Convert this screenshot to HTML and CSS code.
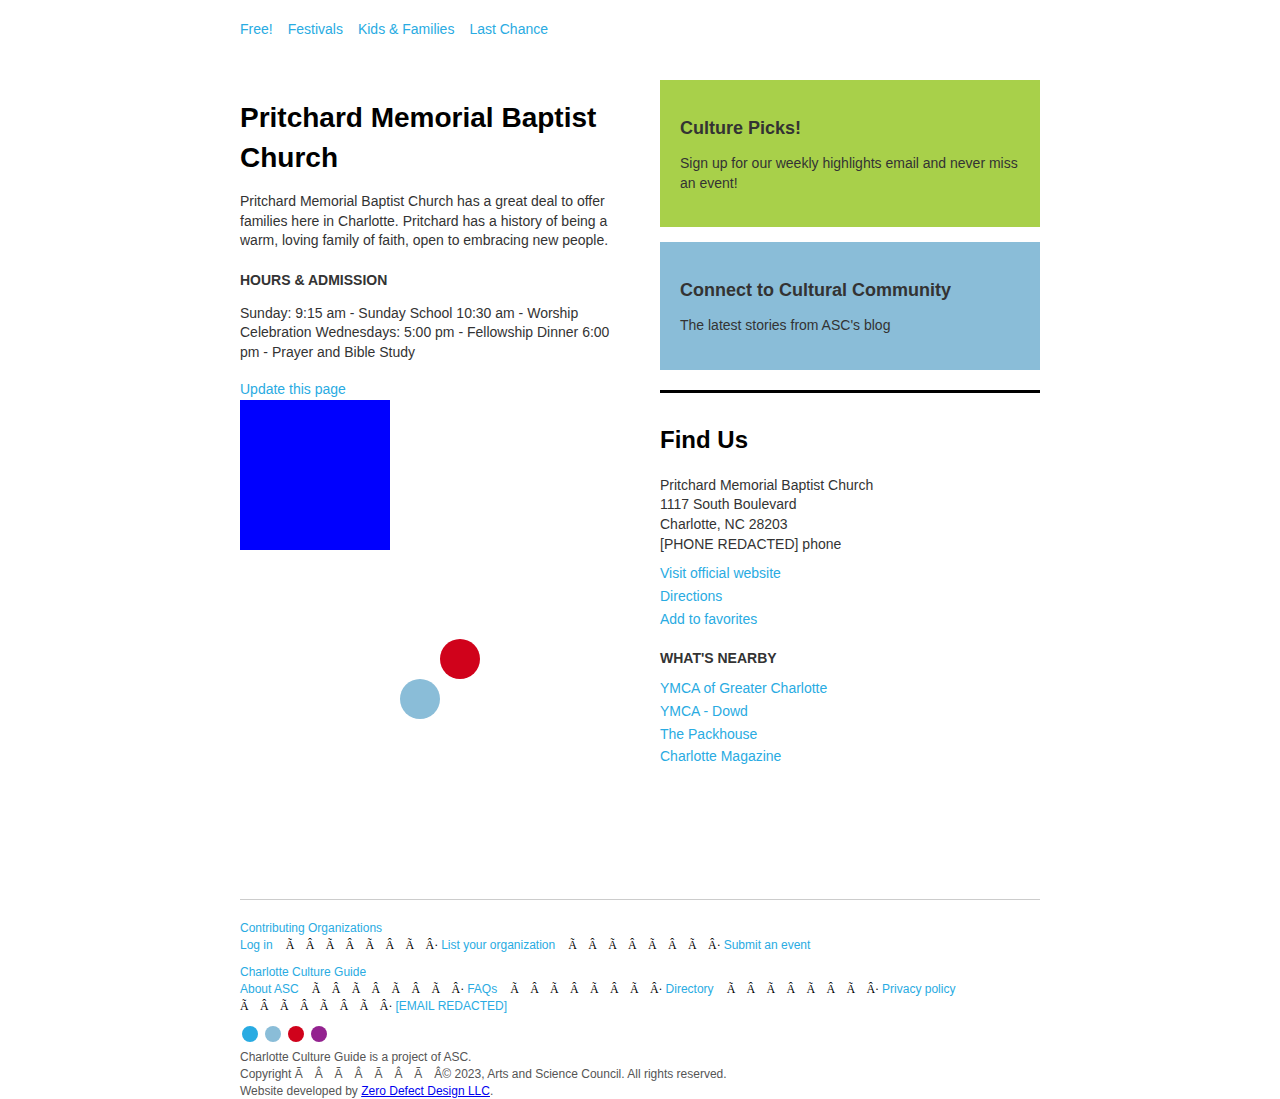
FILE: index.html
```html
<!DOCTYPE html>
<html lang="en">
<head>
<meta charset="utf-8">
<title>Pritchard Memorial Baptist Church</title>
<link rel="stylesheet" href="styles.css">
</head>
<body>
<div class="page">
  <nav class="topnav">
    <a href="#">Free!</a>
    <a href="#">Festivals</a>
    <a href="#">Kids &amp; Families</a>
    <a href="#">Last Chance</a>
  </nav>

  <main class="main">
    <section class="left">
      <h1 class="title">Pritchard Memorial Baptist Church</h1>
      <p class="text">Pritchard Memorial Baptist Church has a great deal to offer families here in Charlotte. Pritchard has a history of being a warm, loving family of faith, open to embracing new people.</p>
      <h4 class="label">HOURS &amp; ADMISSION</h4>
      <p class="text">Sunday: 9:15 am - Sunday School 10:30 am - Worship Celebration Wednesdays: 5:00 pm - Fellowship Dinner 6:00 pm - Prayer and Bible Study</p>
      <a class="update" href="#">Update this page</a>
      <div class="photo"></div>
      <div class="loader">
        <span class="dot"></span>
        <span class="dot red"></span>
        <span class="dot sky"></span>
        <span class="dot"></span>
      </div>
    </section>

    <aside class="right">
      <div class="promo green">
        <h3 class="promo-title">Culture Picks!</h3>
        <p class="promo-text">Sign up for our weekly highlights email and never miss an event!</p>
      </div>
      <div class="promo blue">
        <h3 class="promo-title">Connect to Cultural Community</h3>
        <p class="promo-text">The latest stories from ASC's blog</p>
      </div>
      <div class="findus">
        <h2 class="find-title">Find Us</h2>
        <p class="address">Pritchard Memorial Baptist Church<br>1117 South Boulevard<br>Charlotte, NC 28203<br>[PHONE REDACTED] phone</p>
        <ul class="links">
          <li><a href="#">Visit official website</a></li>
          <li><a href="#">Directions</a></li>
          <li><a href="#">Add to favorites</a></li>
        </ul>
        <h4 class="label nearby">WHAT'S NEARBY</h4>
        <ul class="links nearby-links">
          <li><a href="#">YMCA of Greater Charlotte</a></li>
          <li><a href="#">YMCA - Dowd</a></li>
          <li><a href="#">The Packhouse</a></li>
          <li><a href="#">Charlotte Magazine</a></li>
        </ul>
      </div>
    </aside>
  </main>

  <footer class="footer">
    <div class="fgroup">
      <div class="fline"><a href="#">Contributing Organizations</a></div>
      <div class="fline"><a href="#">Log in</a> <span class="mj">Ã&nbsp;Â&nbsp;Ã&nbsp;Â&nbsp;Ã&nbsp;Â&nbsp;Ã&nbsp;Â·</span> <a href="#">List your organization</a> <span class="mj">Ã&nbsp;Â&nbsp;Ã&nbsp;Â&nbsp;Ã&nbsp;Â&nbsp;Ã&nbsp;Â·</span> <a href="#">Submit an event</a></div>
    </div>
    <div class="fgroup">
      <div class="fline"><a href="#">Charlotte Culture Guide</a></div>
      <div class="fline"><a href="#">About ASC</a> <span class="mj">Ã&nbsp;Â&nbsp;Ã&nbsp;Â&nbsp;Ã&nbsp;Â&nbsp;Ã&nbsp;Â·</span> <a href="#">FAQs</a> <span class="mj">Ã&nbsp;Â&nbsp;Ã&nbsp;Â&nbsp;Ã&nbsp;Â&nbsp;Ã&nbsp;Â·</span> <a href="#">Directory</a> <span class="mj">Ã&nbsp;Â&nbsp;Ã&nbsp;Â&nbsp;Ã&nbsp;Â&nbsp;Ã&nbsp;Â·</span> <a href="#">Privacy policy</a> <span class="mj first">Ã&nbsp;Â&nbsp;Ã&nbsp;Â&nbsp;Ã&nbsp;Â&nbsp;Ã&nbsp;Â·</span> <a href="#">[EMAIL REDACTED]</a></div>
    </div>
    <div class="brand-dots">
      <span class="bdot c1"></span>
      <span class="bdot c2"></span>
      <span class="bdot c3"></span>
      <span class="bdot c4"></span>
    </div>
    <div class="legal">
      <div>Charlotte Culture Guide is a project of ASC.</div>
      <div>Copyright <span class="mj2">Ã&nbsp;Â&nbsp;Ã&nbsp;Â&nbsp;Ã&nbsp;Â&nbsp;Ã&nbsp;Â©</span> 2023, Arts and Science Council. All rights reserved.</div>
      <div>Website developed by <a class="dev" href="#">Zero Defect Design LLC</a>.</div>
    </div>
  </footer>
</div>
</body>
</html>
```

FILE: styles.css
```css
* { box-sizing: border-box; }

html, body {
  margin: 0;
  padding: 0;
  background: #fff;
}

body {
  font-family: "Liberation Sans", Arial, sans-serif;
  font-size: 14px;
  line-height: 1.4;
  color: #333;
}

a {
  color: #29abe2;
  text-decoration: none;
}

.page {
  width: 800px;
  margin: 0 auto;
}

.topnav {
  display: flex;
  gap: 15px;
  padding-top: 20px;
  height: 80px;
}

.main {
  display: flex;
  gap: 40px;
  align-items: flex-start;
}

.left {
  width: 380px;
  flex: none;
}

.right {
  width: 380px;
  flex: none;
}

.title {
  margin: 18px 0 14px;
  font-size: 28px;
  line-height: 40px;
  font-weight: bold;
  color: #000;
}

.text {
  margin: 0;
}

.label {
  margin: 19px 0 14px;
  font-size: 14px;
  font-weight: bold;
  line-height: 20px;
  color: #333;
}

.update {
  display: block;
  margin-top: 16px;
  line-height: 21px;
}

.photo {
  width: 150px;
  height: 150px;
  background: #0000ff;
}

.loader {
  display: grid;
  grid-template-columns: 40px 40px;
  grid-template-rows: 40px 40px;
  width: 80px;
  margin: 89px 0 0 160px;
}

.dot {
  width: 40px;
  height: 40px;
  border-radius: 50%;
}

.dot.red { background: #d0021b; }
.dot.sky { background: #8abdd8; }

.promo {
  padding: 37px 20px 34px;
  margin-bottom: 15px;
}

.promo.green { background: #a8d04a; }
.promo.blue { background: #8abdd8; margin-bottom: 20px; }

.promo-title {
  margin: 0 0 15px;
  font-size: 18px;
  line-height: 22px;
  font-weight: bold;
  color: #333;
}

.promo-text {
  margin: 0;
  color: #333;
}

.findus {
  border-top: 3px solid #000;
}

.find-title {
  margin: 33px 0 22px;
  font-size: 24px;
  line-height: 28px;
  font-weight: bold;
  color: #000;
}

.address {
  margin: 0 0 8px;
}

.links {
  list-style: none;
  margin: 0;
  padding: 0;
}

.links li {
  line-height: 23px;
}

.nearby-links li {
  line-height: 22.7px;
}

.label.nearby {
  margin: 17px 0 9px;
}

.footer {
  margin-top: 131px;
  border-top: 1px solid #ccc;
  padding-top: 20px;
  padding-bottom: 4px;
  font-family: "Liberation Serif", "Times New Roman", serif;
  font-size: 12px;
  line-height: 17px;
  color: #000;
}

.footer a {
  font-family: "Liberation Sans", Arial, sans-serif;
}

.fgroup {
  margin-bottom: 10px;
}

.mj {
  white-space: nowrap;
  word-spacing: 8.3px;
  margin-left: 10px;
}

.mj.first {
  margin-left: 0;
}

.brand-dots {
  display: flex;
  gap: 7px;
  padding-left: 2px;
  margin-top: 11px;
  margin-bottom: 7px;
}

.bdot {
  width: 16px;
  height: 16px;
  border-radius: 50%;
}

.c1 { background: #29abe2; }
.c2 { background: #8abdd8; }
.c3 { background: #d0021b; }
.c4 { background: #93228f; }

.legal {
  font-family: "Liberation Sans", Arial, sans-serif;
  color: #555;
  line-height: 17px;
}

.mj2 {
  word-spacing: 8.6px;
}

.legal a.dev {
  color: #0000ee;
  text-decoration: underline;
}
```
